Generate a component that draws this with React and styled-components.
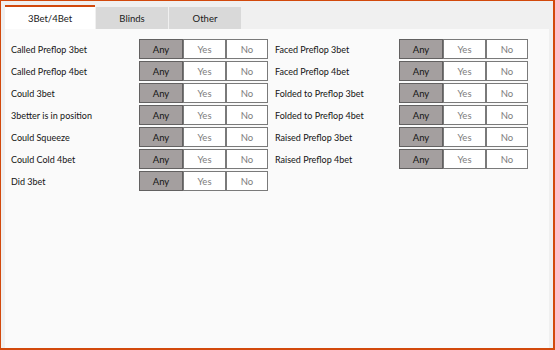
import React from 'react'
import styled, { createGlobalStyle } from 'styled-components'

const Global = createGlobalStyle`
  html, body { margin: 0; padding: 0; }
  body { width: 555px; height: 350px; overflow: hidden; }
`

const Frame = styled.div`
  box-sizing: border-box;
  width: 555px;
  height: 350px;
  border-style: solid;
  border-color: #d2490c;
  border-width: 1px 2px 2px 1px;
  background: #f0f0f0;
  display: flex;
  flex-direction: column;
  font-family: 'Lato', 'Open Sans', sans-serif;
`

const TabBar = styled.div`
  display: flex;
  align-items: flex-end;
  gap: 1px;
  height: 28px;
  padding: 0 4px;
`

const Tab = styled.div`
  box-sizing: border-box;
  width: ${p => (p.active ? '90px' : '72px')};
  height: ${p => (p.active ? '24px' : '22px')};
  background: ${p => (p.active ? '#ffffff' : '#d9d9d9')};
  border-top: ${p => (p.active ? '2px solid #d2490c' : 'none')};
  display: flex;
  align-items: center;
  justify-content: center;
  font-size: 9.5px;
  color: #1a1a1a;
`

const Panel = styled.div`
  flex: 1;
  margin: 0 4px;
  background: #fafafa;
  padding: 10px 6px;
  display: grid;
  grid-template-columns: 257px 253px;
  column-gap: 7px;
  align-content: start;
`

const Column = styled.div`
  display: flex;
  flex-direction: column;
  gap: 2px;
`

const Row = styled.div`
  display: grid;
  grid-template-columns: ${p => p.labelWidth}px 129px;
  align-items: center;
  height: 20px;
`

const Label = styled.span`
  font-size: 9px;
  color: #141414;
`

const Group = styled.div`
  display: flex;
  height: 20px;
`

const Choice = styled.div`
  box-sizing: border-box;
  width: ${p => p.w}px;
  height: 20px;
  border: 1px solid ${p => (p.selected ? '#626060' : '#7a7a7a')};
  background: ${p => (p.selected ? '#a49f9f' : '#ffffff')};
  color: ${p => (p.selected ? '#141414' : '#7c7c7c')};
  display: flex;
  align-items: center;
  justify-content: center;
  font-size: 9.5px;
`

const left = [
  'Called Preflop 3bet',
  'Called Preflop 4bet',
  'Could 3bet',
  '3better is in position',
  'Could Squeeze',
  'Could Cold 4bet',
  'Did 3bet'
]

const right = [
  'Faced Preflop 3bet',
  'Faced Preflop 4bet',
  'Folded to Preflop 3bet',
  'Folded to Preflop 4bet',
  'Raised Preflop 3bet',
  'Raised Preflop 4bet'
]

const FilterRow = ({ label, labelWidth }) => (
  <Row labelWidth={labelWidth}>
    <Label>{label}</Label>
    <Group>
      <Choice w={44} selected>Any</Choice>
      <Choice w={43}>Yes</Choice>
      <Choice w={42}>No</Choice>
    </Group>
  </Row>
)

const App = () => (
  <>
    <Global />
    <Frame>
      <TabBar>
        <Tab active>3Bet/4Bet</Tab>
        <Tab>Blinds</Tab>
        <Tab>Other</Tab>
      </TabBar>
      <Panel>
        <Column>
          {left.map(l => <FilterRow key={l} label={l} labelWidth={128} />)}
        </Column>
        <Column>
          {right.map(l => <FilterRow key={l} label={l} labelWidth={124} />)}
        </Column>
      </Panel>
    </Frame>
  </>
)

export default App
